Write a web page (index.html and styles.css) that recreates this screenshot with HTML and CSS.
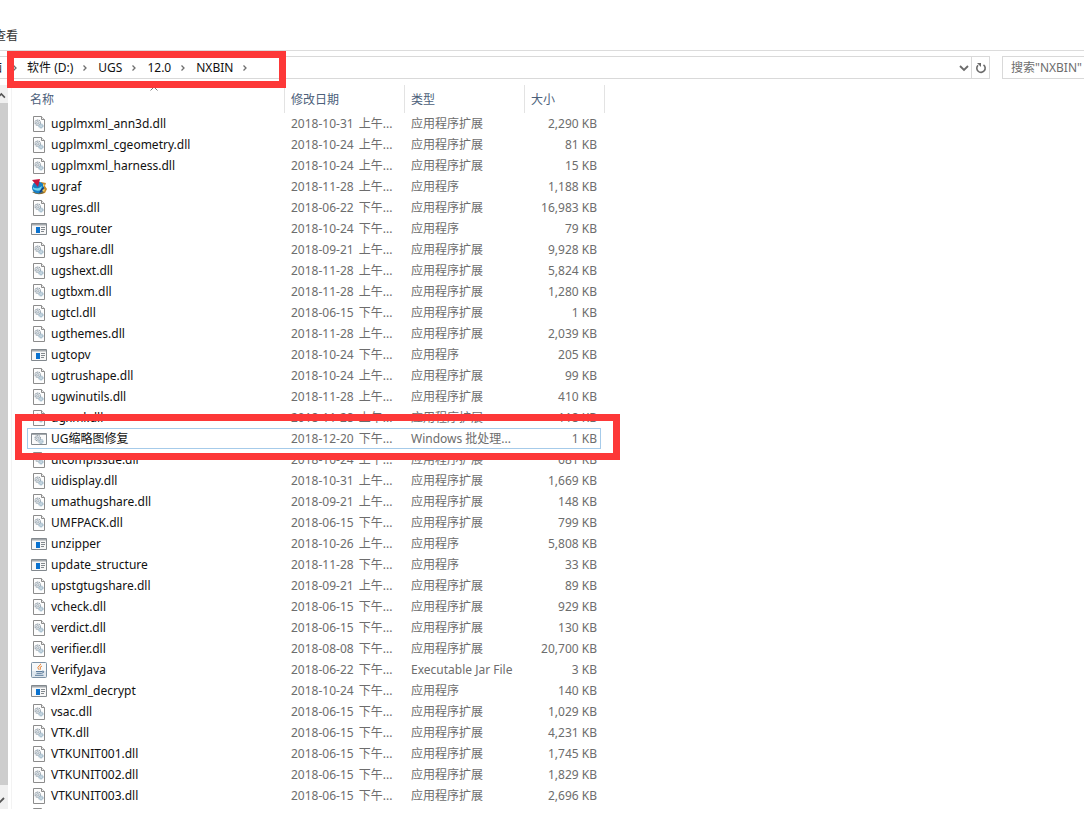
FILE: index.html
```
<!DOCTYPE html>
<html lang="zh-CN">
<head>
<meta charset="utf-8">
<title>NXBIN</title>
<link rel="stylesheet" href="styles.css">
</head>
<body>
<svg class="defs" aria-hidden="true">
  <symbol id="gears" viewBox="0 0 12 12">
    <circle cx="4.5" cy="4.5" r="3.2" fill="none" stroke="#8b98a3" stroke-width="1.4" stroke-dasharray="1.3 .7"/>
    <circle cx="4.5" cy="4.5" r="1.5" fill="#dfe7ee" stroke="#8b98a3" stroke-width=".8"/>
    <circle cx="8.3" cy="8.3" r="2.4" fill="#dce8f0" stroke="#8fabbd" stroke-width="1.3" stroke-dasharray="1.2 .6"/>
    <circle cx="8.3" cy="8.3" r=".8" fill="#fff" stroke="#8fabbd" stroke-width=".6"/>
  </symbol>
  <symbol id="dll" viewBox="0 0 16 16">
    <path d="M2.5.5h8l3 3v12h-11z" fill="#fdfdfd" stroke="#8c8c8c"/>
    <path d="M10.5.5v3h3" fill="#eee" stroke="#8c8c8c"/>
    <use href="#gears" x="3" y="3" width="10" height="10"/>
  </symbol>
  <symbol id="exe" viewBox="0 0 16 16">
    <path d="M.5 2.5h15v11H.5z" fill="#f7f7f7" stroke="#83898e"/>
    <path d="M1 3h14v1.5H1z" fill="#a4a9ad"/>
    <path d="M5 6h4v6H5z" fill="#0a72cf"/>
    <path d="M10 6.5h4M10 8.5h4M10 10.5h3" stroke="#83898e"/>
  </symbol>
  <symbol id="bat" viewBox="0 0 16 16">
    <path d="M.5 2.500h15v11H.5z" fill="#fafafa" stroke="#83898e"/>
    <path d="M1 3h14v1H1z" fill="#a4a9ad"/>
    <use href="#gears" x="3" y="3.500" width="10" height="10"/>
  </symbol>
  <symbol id="nx" viewBox="0 0 16 16">
    <path d="M10 3l5 1-1 3 2 3-2 4-5 1z" fill="#c98a28"/>
    <path d="M1 13q6 4 12 1l-1-3z" fill="#7b6a3c"/>
    <circle cx="7" cy="8.5" r="6" fill="#187fc4"/>
    <path d="M2 8q2 2 6 1l3-2-1 4q-4 2-8-1z" fill="#72d7ee"/>
    <path d="M8 14q4-1 5-6l-3 2z" fill="#123a80"/>
    <path d="M1 1l8-1-2 8z" fill="#c5173f"/>
    <path d="M12 5l2 1-2 2zM11 11l3-1-1 3z" fill="#f4d168"/>
  </symbol>
  <symbol id="jar" viewBox="0 0 16 16">
    <rect x=".5" y=".5" width="15" height="15" rx="1" fill="#dfe7ee" stroke="#7d92a5"/>
    <path d="M1 1h14v8H1z" fill="#f5f8fa"/>
    <path d="M9.500 1.800q.5 1.200-1.500 2.200T7.500 7.500M11 4Q8.500 5 9.200 6t-.5 2" fill="none" stroke="#e88335" stroke-width="1"/>
    <path d="M5 9.500h6M5.500 11.300h5M4 13.300h8.500M11 9.200q2.500-.5 1.500 1.300l-2 .8" fill="none" stroke="#5b7c9c" stroke-width="1"/>
  </symbol>
  <symbol id="chev" viewBox="0 0 6 8"><path d="M1.500 1.500L4 4 1.500 6.500" fill="none" stroke="#6e6e6e" stroke-width="1.300"/></symbol>
</svg>

<nav class="tabs"><a href="#view">查看</a></nav>

<div class="toolbar">
  <div class="address">
    <ol class="crumbs">
      <li class="cut"><a href="#pc">电脑</a><svg><use href="#chev"/></svg></li>
      <li><a href="#d">软件 (D:)</a><svg><use href="#chev"/></svg></li>
      <li><a href="#ugs">UGS</a><svg><use href="#chev"/></svg></li>
      <li><a href="#v12">12.0</a><svg><use href="#chev"/></svg></li>
      <li><a href="#nxbin">NXBIN</a><svg><use href="#chev"/></svg></li>
    </ol>
    <button class="drop" aria-label="以前的位置"><svg viewBox="0 0 10 8"><path d="M1 2l4 4 4-4" fill="none" stroke="#6b6b6b" stroke-width="1.800"/></svg></button>
    <button class="refresh" aria-label="刷新"><svg viewBox="0 0 12 12"><path d="M3 3.200A4.200 4.200 0 1 0 8.500 2.800" fill="none" stroke="#6b6b6b" stroke-width="1.600"/><path d="M2 1h4v4z" fill="#6b6b6b"/></svg></button>
  </div>
  <input class="search" type="text" aria-label="搜索" placeholder='搜索"NXBIN"'>
</div>

<main class="content">
  <div class="scroll">
    <svg viewBox="0 0 8 20"><path d="M-3 14l4-4 4 4" fill="none" stroke="#555" stroke-width="1.800"/></svg>
    <div class="thumb"></div>
    <svg class="down" viewBox="0 0 8 24"><path d="M-3 14l3 3 4-4" fill="none" stroke="#555" stroke-width="1.800"/></svg>
  </div>
  <div class="files">
  <table>
    <colgroup><col class="c-name"><col class="c-date"><col class="c-type"><col class="c-size"></colgroup>
    <thead><tr><th><svg class="sort" viewBox="0 0 8 5"><path d="M.5 4.500L4 1l3.500 3.500" fill="none" stroke="#777"/></svg>名称</th><th>修改日期</th><th>类型</th><th>大小</th></tr></thead>
    <tbody>
    <tr><td><svg><use href="#dll"/></svg>ugplmxml_ann3d.dll</td><td><time>2018-10-31</time> 上午...</td><td>应用程序扩展</td><td>2,290 KB</td></tr>
    <tr><td><svg><use href="#dll"/></svg>ugplmxml_cgeometry.dll</td><td><time>2018-10-24</time> 上午...</td><td>应用程序扩展</td><td>81 KB</td></tr>
    <tr><td><svg><use href="#dll"/></svg>ugplmxml_harness.dll</td><td><time>2018-10-24</time> 上午...</td><td>应用程序扩展</td><td>15 KB</td></tr>
    <tr><td><svg><use href="#nx"/></svg>ugraf</td><td><time>2018-11-28</time> 上午...</td><td>应用程序</td><td>1,188 KB</td></tr>
    <tr><td><svg><use href="#dll"/></svg>ugres.dll</td><td><time>2018-06-22</time> 下午...</td><td>应用程序扩展</td><td>16,983 KB</td></tr>
    <tr><td><svg><use href="#exe"/></svg>ugs_router</td><td><time>2018-10-24</time> 下午...</td><td>应用程序</td><td>79 KB</td></tr>
    <tr><td><svg><use href="#dll"/></svg>ugshare.dll</td><td><time>2018-09-21</time> 上午...</td><td>应用程序扩展</td><td>9,928 KB</td></tr>
    <tr><td><svg><use href="#dll"/></svg>ugshext.dll</td><td><time>2018-11-28</time> 上午...</td><td>应用程序扩展</td><td>5,824 KB</td></tr>
    <tr><td><svg><use href="#dll"/></svg>ugtbxm.dll</td><td><time>2018-11-28</time> 上午...</td><td>应用程序扩展</td><td>1,280 KB</td></tr>
    <tr><td><svg><use href="#dll"/></svg>ugtcl.dll</td><td><time>2018-06-15</time> 下午...</td><td>应用程序扩展</td><td>1 KB</td></tr>
    <tr><td><svg><use href="#dll"/></svg>ugthemes.dll</td><td><time>2018-11-28</time> 上午...</td><td>应用程序扩展</td><td>2,039 KB</td></tr>
    <tr><td><svg><use href="#exe"/></svg>ugtopv</td><td><time>2018-10-24</time> 下午...</td><td>应用程序</td><td>205 KB</td></tr>
    <tr><td><svg><use href="#dll"/></svg>ugtrushape.dll</td><td><time>2018-10-24</time> 上午...</td><td>应用程序扩展</td><td>99 KB</td></tr>
    <tr><td><svg><use href="#dll"/></svg>ugwinutils.dll</td><td><time>2018-11-28</time> 上午...</td><td>应用程序扩展</td><td>410 KB</td></tr>
    <tr><td><svg><use href="#dll"/></svg>ugxml.dll</td><td><time>2018-11-28</time> 上午...</td><td>应用程序扩展</td><td>118 KB</td></tr>
    <tr class="focused"><td><svg><use href="#bat"/></svg>UG缩略图修复</td><td><time>2018-12-20</time> 下午...</td><td>Windows 批处理...</td><td>1 KB</td></tr>
    <tr><td><svg><use href="#dll"/></svg>uicompissue.dll</td><td><time>2018-10-24</time> 上午...</td><td>应用程序扩展</td><td>681 KB</td></tr>
    <tr><td><svg><use href="#dll"/></svg>uidisplay.dll</td><td><time>2018-10-31</time> 上午...</td><td>应用程序扩展</td><td>1,669 KB</td></tr>
    <tr><td><svg><use href="#dll"/></svg>umathugshare.dll</td><td><time>2018-09-21</time> 上午...</td><td>应用程序扩展</td><td>148 KB</td></tr>
    <tr><td><svg><use href="#dll"/></svg>UMFPACK.dll</td><td><time>2018-06-15</time> 下午...</td><td>应用程序扩展</td><td>799 KB</td></tr>
    <tr><td><svg><use href="#exe"/></svg>unzipper</td><td><time>2018-10-26</time> 上午...</td><td>应用程序</td><td>5,808 KB</td></tr>
    <tr><td><svg><use href="#exe"/></svg>update_structure</td><td><time>2018-11-28</time> 下午...</td><td>应用程序</td><td>33 KB</td></tr>
    <tr><td><svg><use href="#dll"/></svg>upstgtugshare.dll</td><td><time>2018-09-21</time> 上午...</td><td>应用程序扩展</td><td>89 KB</td></tr>
    <tr><td><svg><use href="#dll"/></svg>vcheck.dll</td><td><time>2018-06-15</time> 下午...</td><td>应用程序扩展</td><td>929 KB</td></tr>
    <tr><td><svg><use href="#dll"/></svg>verdict.dll</td><td><time>2018-06-15</time> 下午...</td><td>应用程序扩展</td><td>130 KB</td></tr>
    <tr><td><svg><use href="#dll"/></svg>verifier.dll</td><td><time>2018-08-08</time> 下午...</td><td>应用程序扩展</td><td>20,700 KB</td></tr>
    <tr><td><svg><use href="#jar"/></svg>VerifyJava</td><td><time>2018-06-22</time> 下午...</td><td>Executable Jar File</td><td>3 KB</td></tr>
    <tr><td><svg><use href="#exe"/></svg>vl2xml_decrypt</td><td><time>2018-10-24</time> 下午...</td><td>应用程序</td><td>140 KB</td></tr>
    <tr><td><svg><use href="#dll"/></svg>vsac.dll</td><td><time>2018-06-15</time> 下午...</td><td>应用程序扩展</td><td>1,029 KB</td></tr>
    <tr><td><svg><use href="#dll"/></svg>VTK.dll</td><td><time>2018-06-15</time> 下午...</td><td>应用程序扩展</td><td>4,231 KB</td></tr>
    <tr><td><svg><use href="#dll"/></svg>VTKUNIT001.dll</td><td><time>2018-06-15</time> 下午...</td><td>应用程序扩展</td><td>1,745 KB</td></tr>
    <tr><td><svg><use href="#dll"/></svg>VTKUNIT002.dll</td><td><time>2018-06-15</time> 下午...</td><td>应用程序扩展</td><td>1,829 KB</td></tr>
    <tr><td><svg><use href="#dll"/></svg>VTKUNIT003.dll</td><td><time>2018-06-15</time> 下午...</td><td>应用程序扩展</td><td>2,696 KB</td></tr>
    </tbody>
  </table>
  <svg class="next" viewBox="0 0 16 3"><path d="M2.500 3V2.500h8l2 2" fill="none" stroke="#8c8c8c"/></svg>
  </div>
</main>

<div class="mark mark-path"></div>
<div class="mark mark-file"></div>
</body>
</html>
```
FILE: styles.css
```
* { box-sizing: border-box; }
body {
  margin: 0;
  background: #fff;
  color: #111;
  font: 12px/20px "Noto Sans", "Noto Sans CJK SC", sans-serif;
  overflow: hidden;
  position: relative;
}
.defs { position: absolute; width: 0; height: 0; }
a { color: inherit; text-decoration: none; }
button { border: 0; background: none; padding: 0; display: grid; place-items: center; }

.tabs {
  height: 51px;
  padding-top: 26px;
  border-bottom: 1px solid #dcdcdc;
  color: #333;
}
.tabs a { margin-left: -6px; }

.toolbar { display: flex; gap: 12px; height: 34px; padding-top: 5px; }
.address {
  flex: 1;
  display: flex;
  height: 23px;
  border: 1px solid #d9d9d9;
  border-left: 0;
}
.crumbs {
  flex: 1;
  display: flex;
  margin: 0;
  padding: 0;
  list-style: none;
}
.crumbs li { display: flex; align-items: center; gap: 9px; margin-right: 10px; }
.crumbs .cut { margin-left: -22px; gap: 10px; margin-right: 9px; }
.crumbs svg { width: 6px; height: 8px; }
.drop { width: 15px; }
.drop svg { width: 10px; height: 8px; }
.refresh { width: 18px; border-left: 1px solid #d9d9d9; }
.refresh svg { width: 12px; height: 12px; }
.search {
  width: 82px;
  height: 23px;
  border: 1px solid #d9d9d9;
  border-right: 0;
  padding: 0 0 0 8px;
  font: inherit;
}
.search::placeholder { color: #6d6d6d; opacity: 1; }

.content { display: flex; height: 724px; overflow: hidden; }
.scroll {
  width: 8px;
  display: flex;
  flex-direction: column;
  background: #f0f0f0;
}
.scroll svg { width: 8px; height: 18px; }
.scroll .down { height: 24px; }
.scroll .thumb { flex: 1; background: #cdcdcd; }
.files { flex: 1; margin-left: 3px; border-left: 1px solid #f3f3f3; }

table { width: 593px; border-collapse: separate; border-spacing: 0; table-layout: fixed; }
.c-name { width: 273px; }
.c-date, .c-type { width: 120px; }
.c-size { width: 80px; }
th {
  position: relative;
  height: 28px;
  padding: 1px 0 0 6px;
  border-right: 1px solid #e3e3e3;
  color: #4c607a;
  font-weight: 400;
  text-align: left;
}
th:first-child { padding-left: 18px; }
.sort { position: absolute; left: 138px; top: 1px; width: 8px; height: 5px; }
td {
  height: 21px;
  padding: 0 0 0 6px;
  color: #6d6d6d;
  line-height: 21px;
  white-space: nowrap;
}
td:first-child { padding-left: 19px; color: #111; }
td:last-child { padding: 0 8px 0 0; text-align: right; }
td svg { width: 16px; height: 16px; margin: -2px 4px 0 0; vertical-align: middle; }
time { margin-right: 2px; }
.focused { position: relative; }
.focused::after {
  content: "";
  position: absolute;
  inset: 0 4px 0 15px;
  border: 1px solid #a6cbea;
}
.next { display: block; width: 16px; height: 3px; margin-left: 19px; }

.mark { position: absolute; border: 7px solid #fd3838; }
.mark-path { left: 7px; top: 51px; width: 279px; height: 37px; }
.mark-file { left: 15px; top: 414px; width: 605px; height: 46px; }
```
